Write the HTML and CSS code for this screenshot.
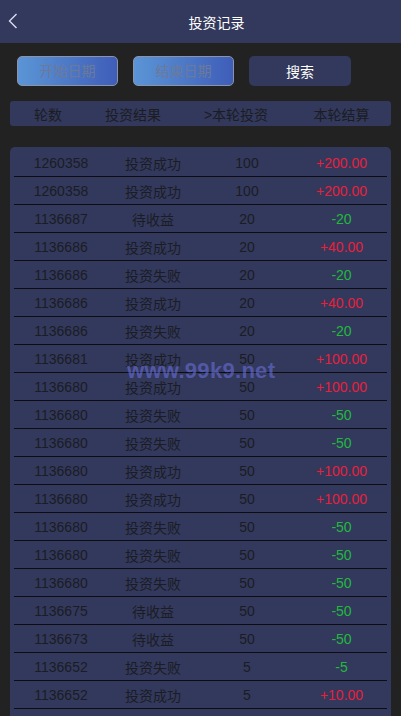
FILE: index.html
```html
<!DOCTYPE html>
<html lang="zh-CN">
<head>
  <meta charset="UTF-8">
  <meta name="viewport" content="width=device-width, initial-scale=1.0">
  <title>投资记录</title>
  <link rel="stylesheet" href="styles.css">
</head>
<body>
  <header class="topbar">
    <a class="back" href="#">
      <svg width="10" height="16" viewBox="0 0 10 16"><path d="M8.5 1 L1.5 8 L8.5 15" fill="none" stroke="#d8dcf0" stroke-width="1.4"/></svg>
    </a>
    <h1>投资记录</h1>
    <span></span>
  </header>

  <div class="toolbar">
    <button class="date-btn">开始日期</button>
    <button class="date-btn">结束日期</button>
    <button class="search-btn">搜索</button>
  </div>

  <div class="thead">
    <span>轮数</span>
    <span>投资结果</span>
    <span>&gt;本轮投资</span>
    <span>本轮结算</span>
  </div>

  <div class="list">
    <div class="watermark">www.99k9.net</div>
    <div class="row"><span>1260358</span><span>投资成功</span><span>100</span><span class="win">+200.00</span></div>
    <div class="row"><span>1260358</span><span>投资成功</span><span>100</span><span class="win">+200.00</span></div>
    <div class="row"><span>1136687</span><span>待收益</span><span>20</span><span class="lose">-20</span></div>
    <div class="row"><span>1136686</span><span>投资成功</span><span>20</span><span class="win">+40.00</span></div>
    <div class="row"><span>1136686</span><span>投资失败</span><span>20</span><span class="lose">-20</span></div>
    <div class="row"><span>1136686</span><span>投资成功</span><span>20</span><span class="win">+40.00</span></div>
    <div class="row"><span>1136686</span><span>投资失败</span><span>20</span><span class="lose">-20</span></div>
    <div class="row"><span>1136681</span><span>投资成功</span><span>50</span><span class="win">+100.00</span></div>
    <div class="row"><span>1136680</span><span>投资成功</span><span>50</span><span class="win">+100.00</span></div>
    <div class="row"><span>1136680</span><span>投资失败</span><span>50</span><span class="lose">-50</span></div>
    <div class="row"><span>1136680</span><span>投资失败</span><span>50</span><span class="lose">-50</span></div>
    <div class="row"><span>1136680</span><span>投资成功</span><span>50</span><span class="win">+100.00</span></div>
    <div class="row"><span>1136680</span><span>投资成功</span><span>50</span><span class="win">+100.00</span></div>
    <div class="row"><span>1136680</span><span>投资失败</span><span>50</span><span class="lose">-50</span></div>
    <div class="row"><span>1136680</span><span>投资失败</span><span>50</span><span class="lose">-50</span></div>
    <div class="row"><span>1136680</span><span>投资失败</span><span>50</span><span class="lose">-50</span></div>
    <div class="row"><span>1136675</span><span>待收益</span><span>50</span><span class="lose">-50</span></div>
    <div class="row"><span>1136673</span><span>待收益</span><span>50</span><span class="lose">-50</span></div>
    <div class="row"><span>1136652</span><span>投资失败</span><span>5</span><span class="lose">-5</span></div>
    <div class="row"><span>1136652</span><span>投资成功</span><span>5</span><span class="win">+10.00</span></div>
  </div>
</body>
</html>
```

FILE: styles.css
```css
body {
  margin: 0;
  background: #222222;
  font-family: 'Liberation Sans', 'Noto Sans CJK SC', sans-serif;
  font-size: 14px;
  overflow: hidden;
}

.topbar {
  height: 43px;
  background: #32395c;
  display: grid;
  grid-template-columns: 40px 1fr 8px;
  align-items: center;
}

.back {
  display: flex;
  padding-left: 8px;
  padding-bottom: 1px;
}

.topbar h1 {
  margin: 0;
  text-align: center;
  color: #fff;
  font-size: 14px;
  font-weight: normal;
}

.toolbar {
  display: flex;
  gap: 15px;
  padding: 13px 0 0 17px;
}

.toolbar button {
  width: 101px;
  height: 30px;
  border-radius: 5px;
  font-family: inherit;
  font-size: 14px;
  padding: 0;
  cursor: pointer;
}

.date-btn {
  background: linear-gradient(90deg, #5b95d6, #3f5db8);
  border: 1px solid #8a93a8;
  color: #6c7a99;
  padding-bottom: 3px !important;
}

.search-btn {
  width: 102px !important;
  background: #32395c;
  border: none;
  color: #fff;
}

.thead {
  margin: 15px 10px 0;
  height: 25px;
  background: #32395c;
  border-radius: 3px;
  display: grid;
  grid-template-columns: 76px 94px 112px 1fr;
  align-items: center;
  color: #1c1c22;
}

.thead span,
.row span {
  text-align: center;
}

.list {
  position: relative;
  margin: 21px 10px 0;
  padding: 2px 4px 10px;
  background: #32395c;
  border-radius: 5px 5px 0 0;
}

.row {
  height: 27px;
  border-bottom: 1px solid #0c0c12;
  display: grid;
  grid-template-columns: 94px 90px 98px 1fr;
  align-items: center;
  color: #1c1c24;
}

.row .win {
  color: #e8203c;
}

.row .lose {
  color: #22b83e;
}

.watermark {
  position: absolute;
  left: 117px;
  top: 211px;
  font-size: 22px;
  font-weight: bold;
  color: rgba(112, 116, 228, 0.55);
  letter-spacing: 0.3px;
  pointer-events: none;
}
```
